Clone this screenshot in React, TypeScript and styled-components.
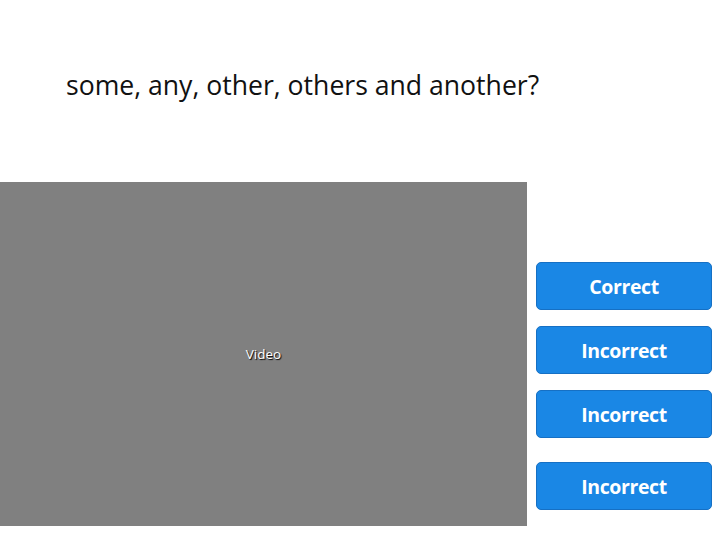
import React from "react";
import styled, { createGlobalStyle } from "styled-components";

const Global = createGlobalStyle`
  html, body { margin: 0; padding: 0; background: #ffffff; }
  body { font-family: "Open Sans", "Noto Sans", sans-serif; width: 720px; height: 540px; overflow: hidden; }
`;

const Page = styled.div`
  width: 720px;
  height: 540px;
  display: flex;
  flex-direction: column;
`;

const Header = styled.div`
  height: 182px;
  padding-left: 66px;
  box-sizing: border-box;
  padding-top: 67px;
`;

const Title = styled.h1`
  margin: 0;
  font-family: "Open Sans", sans-serif;
  font-weight: 400;
  font-size: 26.6px;
  line-height: 36px;
  color: #111111;
`;

const Body = styled.div`
  display: flex;
  gap: 9px;
`;

const Video = styled.div`
  width: 527px;
  height: 344px;
  background: #808080;
  display: flex;
  align-items: center;
  justify-content: center;
`;

const VideoLabel = styled.span`
  font-family: "Open Sans", sans-serif;
  font-size: 13.5px;
  color: #ffffff;
  text-shadow: 1px 1px 1px #000000;
`;

const Answers = styled.div`
  display: flex;
  flex-direction: column;
  padding-top: 80px;
`;

const AnswerButton = styled.button<{ $gap: number }>`
  width: 176px;
  height: 48px;
  margin-bottom: ${(p) => p.$gap}px;
  box-sizing: border-box;
  background: #1a87e5;
  border: 1px solid #1670c4;
  border-radius: 5px;
  color: #ffffff;
  font-family: "Open Sans", sans-serif;
  font-weight: 700;
  font-size: 19.5px;
  letter-spacing: -0.4px;
  padding: 0;
  display: flex;
  align-items: center;
  justify-content: center;
`;

const answers = [
  { label: "Correct", gap: 16 },
  { label: "Incorrect", gap: 16 },
  { label: "Incorrect", gap: 24 },
  { label: "Incorrect", gap: 0 },
];

export default function App() {
  return (
    <Page>
      <Global />
      <Header>
        <Title>some, any, other, others and another?</Title>
      </Header>
      <Body>
        <Video>
          <VideoLabel>Video</VideoLabel>
        </Video>
        <Answers>
          {answers.map((a, i) => (
            <AnswerButton key={i} $gap={a.gap}>
              {a.label}
            </AnswerButton>
          ))}
        </Answers>
      </Body>
    </Page>
  );
}
